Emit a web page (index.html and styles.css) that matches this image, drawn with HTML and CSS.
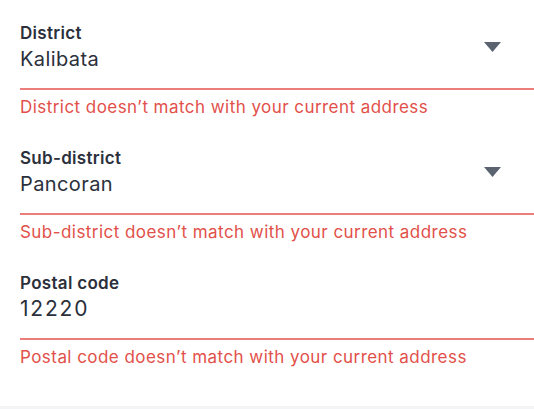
FILE: index.html
```html
<!DOCTYPE html>
<html lang="en">
<head>
<meta charset="utf-8">
<title>Address form</title>
<link rel="stylesheet" href="styles.css">
</head>
<body>
<div class="form">
  <div class="field">
    <div class="control">
      <div class="texts">
        <div class="label">District</div>
        <div class="value">Kalibata</div>
      </div>
      <svg class="caret" width="17" height="10" viewBox="0 0 17 10"><path d="M0 0 H17 L8.5 10 Z" fill="#5b6270"/></svg>
    </div>
    <div class="error">District doesn’t match with your current address</div>
  </div>
  <div class="field">
    <div class="control">
      <div class="texts">
        <div class="label">Sub-district</div>
        <div class="value">Pancoran</div>
      </div>
      <svg class="caret" width="17" height="10" viewBox="0 0 17 10"><path d="M0 0 H17 L8.5 10 Z" fill="#5b6270"/></svg>
    </div>
    <div class="error">Sub-district doesn’t match with your current address</div>
  </div>
  <div class="field">
    <div class="control">
      <div class="texts">
        <div class="label">Postal code</div>
        <div class="value digits">12220</div>
      </div>
    </div>
    <div class="error">Postal code doesn’t match with your current address</div>
  </div>
</div>
<div class="footer-strip"></div>
</body>
</html>
```
FILE: styles.css
```css
html, body {
  margin: 0;
  padding: 0;
  background: #ffffff;
}
body {
  width: 534px;
  height: 409px;
  display: flex;
  flex-direction: column;
  font-family: Inter, "Noto Sans", sans-serif;
  overflow: hidden;
}
.form {
  flex: 1;
  padding: 23px 0 0 20px;
  display: flex;
  flex-direction: column;
  gap: 31px;
}
.control {
  display: flex;
  align-items: flex-start;
  justify-content: space-between;
  border-bottom: 2px solid #ec7e7a;
  padding-bottom: 17px;
}
.label {
  font-size: 17px;
  line-height: 21px;
  font-weight: 600;
  letter-spacing: 0.3px;
  color: #2b303b;
}
.value {
  margin-top: 3px;
  font-size: 20px;
  line-height: 24px;
  letter-spacing: 0.4px;
  color: #2b303b;
}
.digits {
  font-size: 21px;
  letter-spacing: 1.8px;
}
.caret {
  margin: 19px 33px 0 0;
}
.error {
  margin-top: 7px;
  font-size: 17px;
  line-height: 20px;
  letter-spacing: 0.45px;
  color: #e2504a;
}
.footer-strip {
  height: 3px;
  background: #f3f4f6;
}
```
